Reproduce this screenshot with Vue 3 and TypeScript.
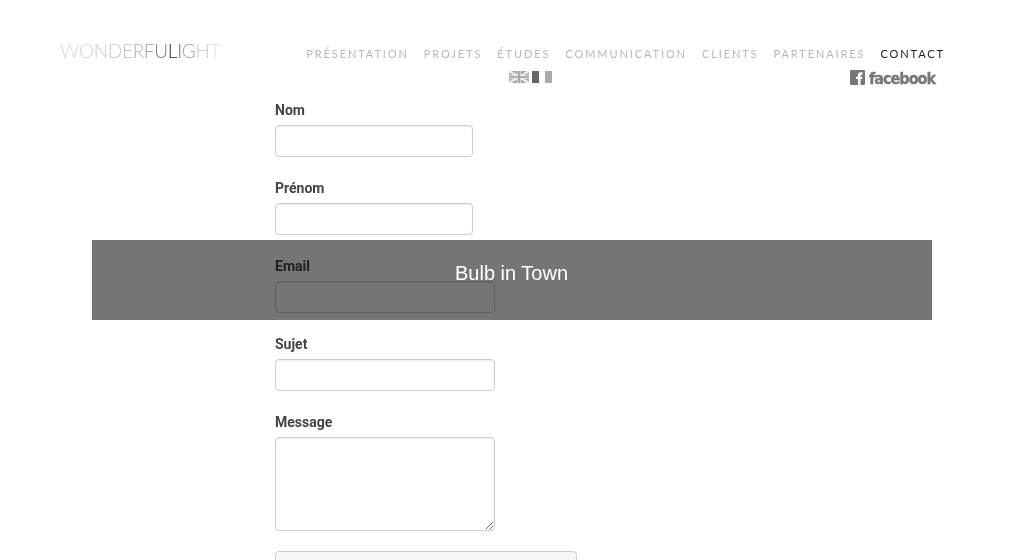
<script setup lang="ts">
const navItems = ['Présentation', 'Projets', 'Études', 'Communication', 'Clients', 'Partenaires', 'Contact']
const logoLetters: [string, string][] = [
  ['W', '#d8d8d8'], ['O', '#d4d4d4'], ['N', '#cecece'], ['D', '#c6c6c6'], ['E', '#bcbcbc'], ['R', '#b0b0b0'],
  ['F', '#a0a0a0'], ['U', '#808080'], ['L', '#2a2a2a'], ['I', '#707070'], ['G', '#a4a4a4'], ['H', '#cacaca'], ['T', '#e0e0e0']
]
</script>

<template>
  <div class="page">
    <header class="header">
      <div class="logo">
        <span v-for="(letter, i) in logoLetters" :key="i" :style="{ color: letter[1] }">{{ letter[0] }}</span>
      </div>
      <div class="header-right">
        <nav class="nav">
          <a v-for="item in navItems" :key="item" :class="{ active: item === 'Contact' }">{{ item }}</a>
        </nav>
        <div class="sub-row">
          <div class="flags">
            <svg width="20" height="12" viewBox="0 0 20 12">
              <rect width="20" height="12" fill="#a4a4a4" />
              <path d="M0 0L20 12M20 0L0 12" stroke="#ececec" stroke-width="2.4" />
              <path d="M10 0V12M0 6H20" stroke="#ececec" stroke-width="3.4" />
              <path d="M10 0V12M0 6H20" stroke="#9a9a9a" stroke-width="1.6" />
            </svg>
            <svg width="20" height="12" viewBox="0 0 20 12">
              <rect width="7" height="12" fill="#666666" />
              <rect x="7" width="6" height="12" fill="#ffffff" />
              <rect x="13" width="7" height="12" fill="#aaaaaa" />
            </svg>
          </div>
          <a class="facebook">
            <svg width="15" height="15" viewBox="0 0 15 15">
              <rect width="15" height="15" rx="1" fill="#777777" />
              <path d="M8 15V9H6V6.8h2V5C8 3.2 9.1 2.3 10.7 2.3H12.5V4.7H11.3C10.7 4.7 10.5 5 10.5 5.6V6.8h2L12.2 9h-1.7V15z" fill="#ffffff" />
            </svg>
            <span>facebook</span>
          </a>
        </div>
      </div>
    </header>

    <form class="contact-form" @submit.prevent>
      <div class="field">
        <label>Nom</label>
        <input class="short" type="text" />
      </div>
      <div class="field">
        <label>Prénom</label>
        <input class="short" type="text" />
      </div>
      <div class="field">
        <label>Email</label>
        <input type="text" />
      </div>
      <div class="field">
        <label>Sujet</label>
        <input type="text" />
      </div>
      <div class="field last">
        <label>Message</label>
        <textarea></textarea>
      </div>
      <button class="send" type="submit"></button>
    </form>

    <div class="overlay">Bulb in Town</div>
  </div>
</template>

<style>
html, body {
  margin: 0;
  height: 560px;
  overflow: hidden;
  background: #fff;
}
</style>

<style scoped>
.page {
  height: 560px;
  overflow: hidden;
  position: relative;
  font-family: Roboto, sans-serif;
  will-change: opacity;
}

.header {
  display: flex;
  justify-content: space-between;
  padding: 41px 79px 0 60px;
  height: 59px;
}

.logo {
  font-family: Lato, sans-serif;
  font-weight: 300;
  font-size: 19px;
  line-height: 20px;
  letter-spacing: -0.3px;
}

.header-right {
  display: flex;
  flex-direction: column;
  align-items: flex-end;
  width: 640px;
}

.nav {
  display: flex;
  gap: 15px;
  margin-top: 6px;
  font-family: Lato, sans-serif;
  font-size: 11px;
  line-height: 14px;
  letter-spacing: 1.9px;
  text-transform: uppercase;
  color: #b8b8b8;
}

.nav .active {
  color: #222;
}

.sub-row {
  display: flex;
  justify-content: space-between;
  width: 436px;
  margin-top: 10px;
  padding-right: 9px;
  box-sizing: border-box;
}

.flags {
  display: flex;
  gap: 3px;
  height: 12px;
}

.facebook {
  display: flex;
  align-items: flex-start;
  gap: 4px;
  height: 16px;
  margin: -1px 1px 0 0;
  font-family: "DejaVu Sans Condensed", "DejaVu Sans", sans-serif;
  font-weight: 700;
  font-size: 16px;
  line-height: 18px;
  letter-spacing: -1px;
  color: #777;
  -webkit-text-stroke: 0.3px #777;
}

.contact-form {
  display: flex;
  flex-direction: column;
  align-items: flex-start;
  padding: 0 0 0 275px;
}

.field {
  display: flex;
  flex-direction: column;
  align-items: flex-start;
  margin-bottom: 21px;
}

.field.last {
  margin-bottom: 20px;
}

label {
  height: 25px;
  font-size: 14px;
  line-height: 20px;
  font-weight: 700;
  color: #444;
}

input, textarea {
  display: block;
  box-sizing: border-box;
  width: 220px;
  height: 32px;
  margin: 0;
  padding: 4px;
  background: #fff;
  border: 1px solid #ccc;
  border-radius: 4px;
  box-shadow: inset 0 1px 1px rgba(0, 0, 0, 0.075);
}

input.short {
  width: 198px;
}

textarea {
  height: 94px;
}

.send {
  width: 302px;
  height: 40px;
  padding: 0;
  background: #f5f5f5;
  border: 1px solid #ccc;
  border-radius: 4px;
}

.overlay {
  position: absolute;
  left: 92px;
  top: 240px;
  width: 840px;
  height: 80px;
  padding: 21px 1px 0 0;
  box-sizing: border-box;
  background: rgba(0, 0, 0, 0.54);
  color: #fff;
  font-family: "Liberation Sans", Arial, sans-serif;
  font-size: 20px;
  line-height: 24px;
  text-align: center;
}
</style>
